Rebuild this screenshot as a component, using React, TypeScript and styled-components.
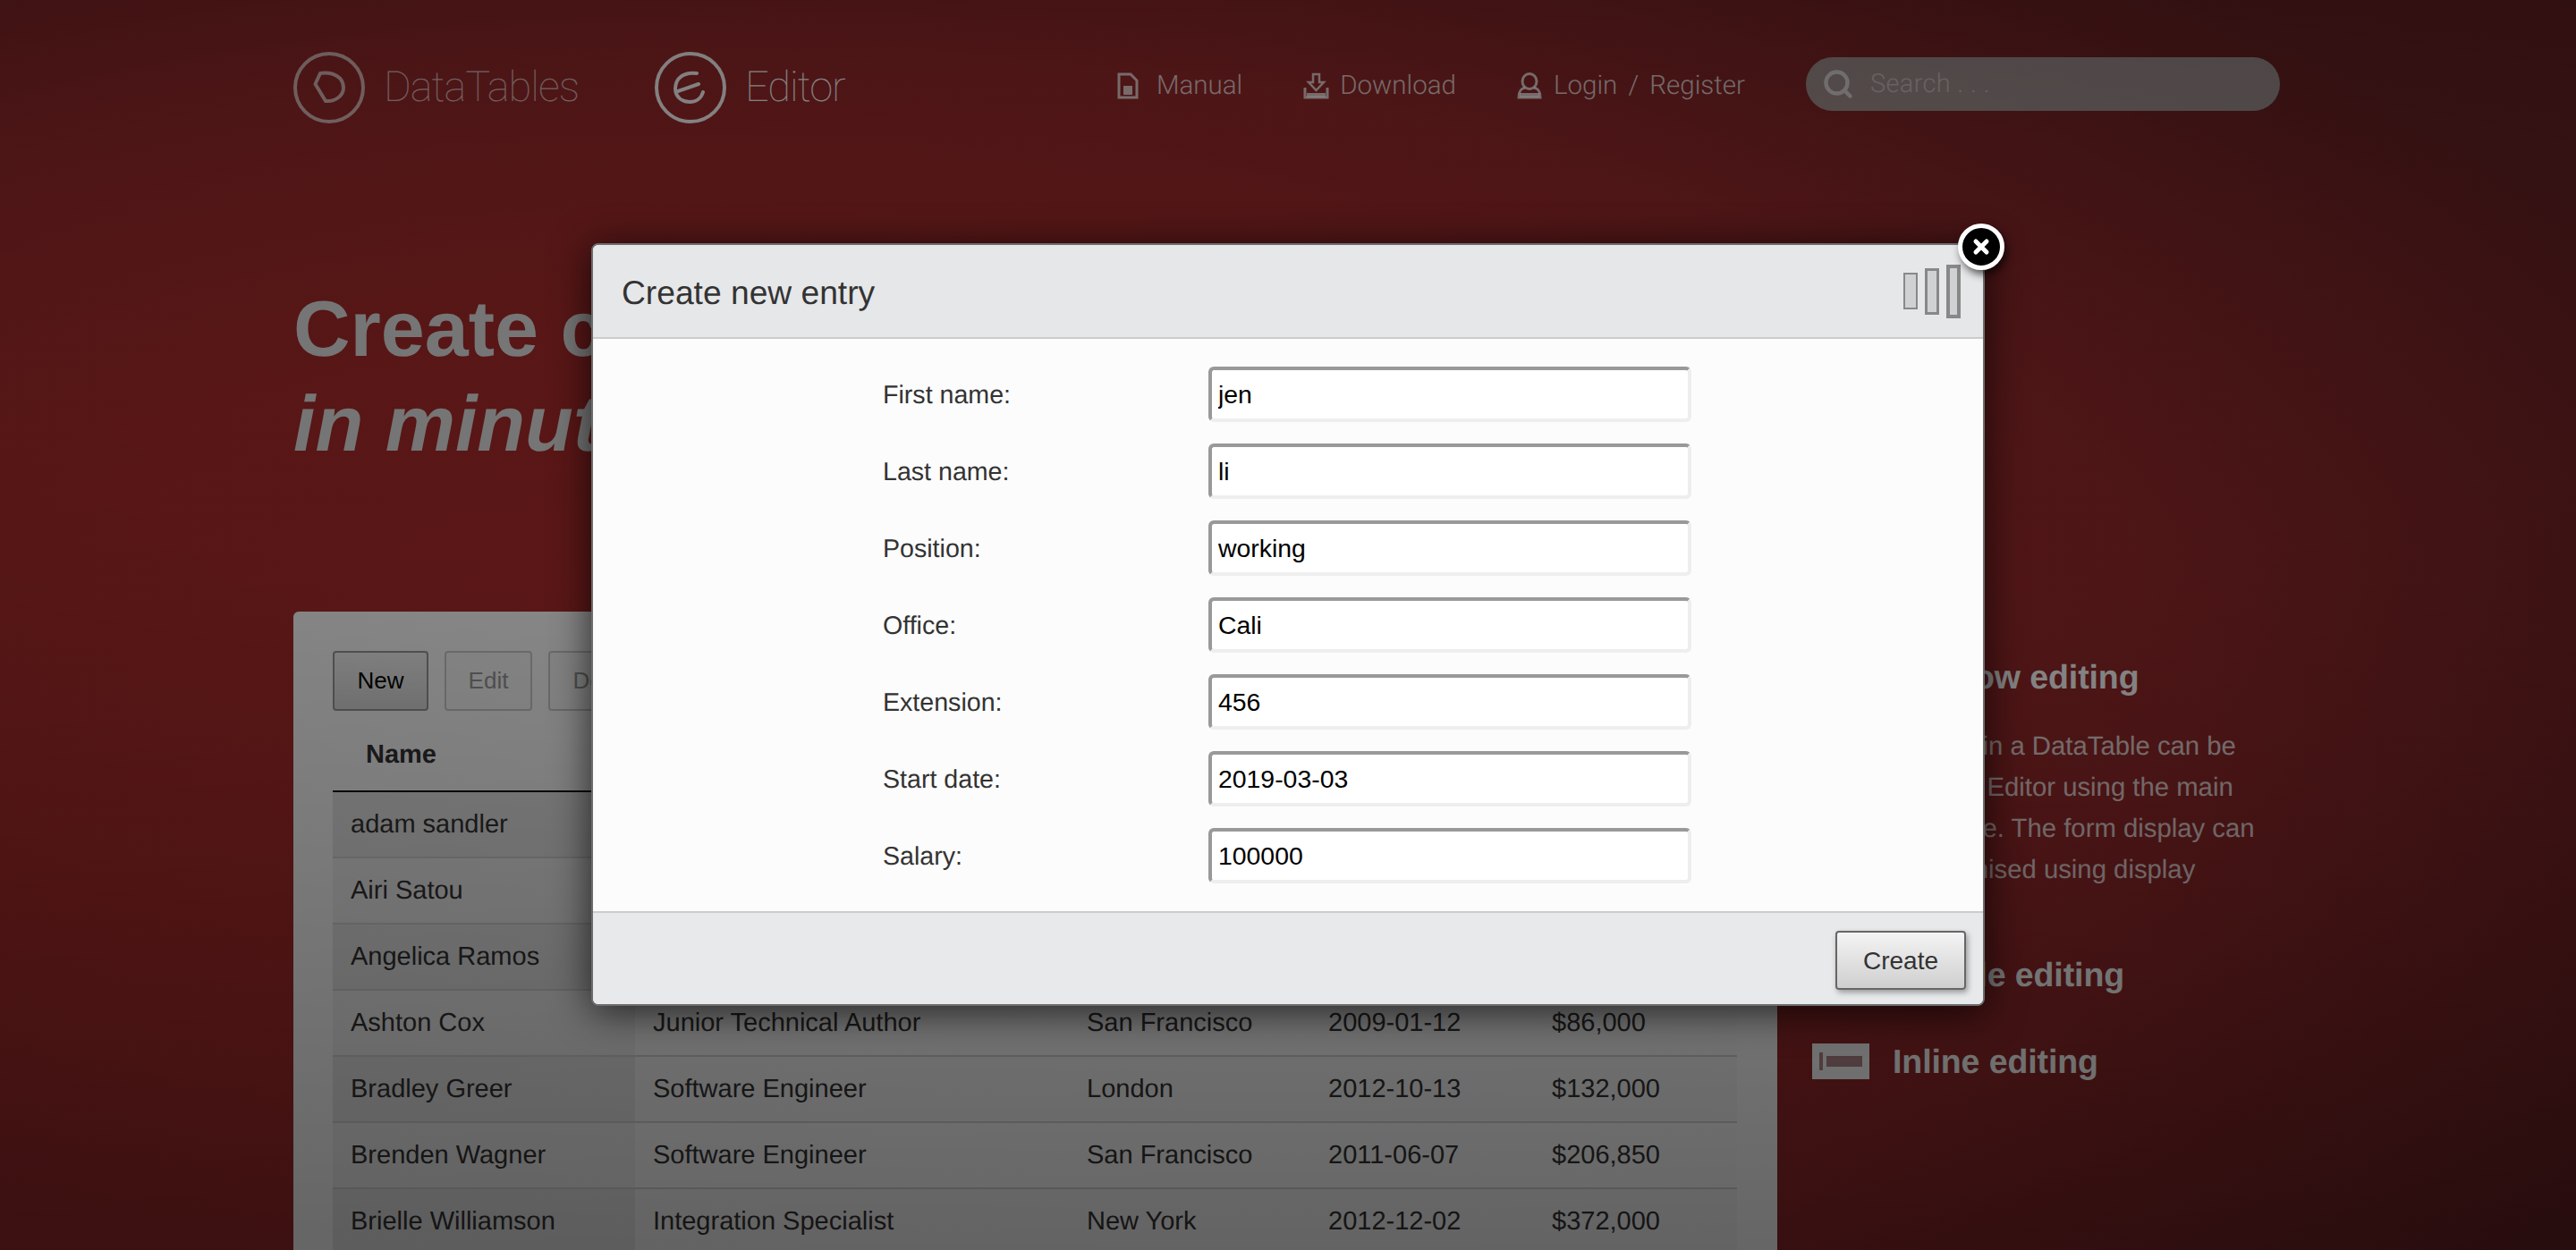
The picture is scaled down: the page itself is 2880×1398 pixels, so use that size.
import React from 'react';
import styled, { createGlobalStyle } from 'styled-components';
import { Search } from 'lucide-react';

const GlobalStyle = createGlobalStyle`
  html, body {
    margin: 0;
    padding: 0;
    background: #8c2020;
    font-family: 'Liberation Sans', Arial, sans-serif;
    text-rendering: geometricPrecision;
  }
  * {
    box-sizing: border-box;
  }
`;

const Page = styled.div`
  position: relative;
  width: 2880px;
  height: 1398px;
  overflow: hidden;
  background: radial-gradient(
    ellipse 2400px 1100px at 800px 800px,
    #ae2b2b 0%,
    #a52a2a 40%,
    #91282a 68%,
    #7d2426 82%,
    #642022 100%
  );
`;

const Inner = styled.div`
  width: 2224px;
  margin: 0 auto;
  padding-top: 58px;
`;

const Header = styled.header`
  display: flex;
  align-items: center;
  height: 79px;
  padding-right: 3px;
`;

const Logo = styled.div<{ $dim?: boolean }>`
  display: flex;
  align-items: center;
  gap: 21px;
  margin-right: 85px;
  color: #fff;
  opacity: ${(p) => (p.$dim ? 0.65 : 0.95)};
`;

const LogoName = styled.span`
  font-family: 'Roboto', sans-serif;
  font-weight: 100;
  font-size: 47px;
  letter-spacing: -1px;
`;

const Nav = styled.nav`
  display: flex;
  align-items: center;
  gap: 68px;
  margin-left: auto;
  margin-bottom: 4px;
`;

const NavItem = styled.a<{ $gap: number }>`
  display: flex;
  align-items: center;
  gap: ${(p) => p.$gap}px;
  color: rgba(255, 255, 255, 0.75);
  font-family: 'Roboto', sans-serif;
  font-weight: 300;
  font-size: 29.500px;
  word-spacing: 5px;
`;

const SearchBox = styled.div`
  display: flex;
  align-items: center;
  gap: 18px;
  width: 530px;
  height: 60px;
  margin-bottom: 4px;
  padding-left: 18px;
  border-radius: 30px;
  background: rgba(165, 165, 165, 0.8);
  color: #fff;
  font-family: 'Roboto', sans-serif;
  font-weight: 300;
  font-size: 29px;
`;

const SearchHint = styled.span`
  opacity: 0.42;
  letter-spacing: 0.3px;
`;

const Hero = styled.h1`
  margin: 178px 0 0;
  font-size: 88px;
  line-height: 106px;
  font-weight: 700;
  color: #dcdcdc;
  white-space: nowrap;
`;

const HeroLine = styled.em`
  display: block;
  font-style: italic;
`;

const Columns = styled.div`
  display: grid;
  grid-template-columns: 1659px 1fr;
  column-gap: 39px;
  margin-top: 157px;
`;

const Card = styled.section`
  padding: 44px 45px 0 44px;
  border-radius: 6px 6px 0 0;
  background: #fff;
  height: 760px;
`;

const Toolbar = styled.div`
  display: flex;
  gap: 18px;
`;

const ToolButton = styled.button<{ $off?: boolean; $w: number }>`
  width: ${(p) => p.$w}px;
  height: 67px;
  border: 2px solid ${(p) => (p.$off ? '#ccc' : '#999')};
  border-radius: 4px;
  background: ${(p) => (p.$off ? '#fbfbfb' : 'linear-gradient(#f6f6f6, #dcdcdc)')};
  color: ${(p) => (p.$off ? '#999' : '#000')};
  font-family: inherit;
  font-size: 26px;
  padding: 0;
`;

const Table = styled.table`
  width: 1570px;
  margin-top: 9px;
  border-collapse: collapse;
  table-layout: fixed;
  font-size: 29px;
  color: #333;
`;

const Th = styled.th<{ $w: number }>`
  width: ${(p) => p.$w}px;
  height: 81px;
  padding: 0 0 0 37px;
  text-align: left;
  font-size: 29px;
  font-weight: 700;
  color: #333;
  border-bottom: 2px solid #111;
`;

const Tr = styled.tr<{ $odd: boolean }>`
  background: ${(p) => (p.$odd ? '#f8f8f8' : '#fdfdfd')};
`;

const Td = styled.td<{ $shade?: string }>`
  height: 74px;
  padding: 0 0 0 20px;
  border-bottom: 2px solid #d6d6d6;
  background: ${(p) => p.$shade ?? 'transparent'};
  white-space: nowrap;
`;

const Sidebar = styled.aside`
  padding-top: 51px;
  color: #fff;
`;

const Feature = styled.h3`
  display: flex;
  align-items: center;
  gap: 26px;
  height: 44px;
  margin: 0 0 33px;
  font-size: 37.500px;
  font-weight: 700;
  letter-spacing: -0.1px;
  white-space: nowrap;
  & + h3 {
    margin-top: 53px;
  }
`;

const Copy = styled.p`
  margin: 0 0 72px;
  width: 526px;
  font-size: 29.300px;
  line-height: 46px;
  white-space: nowrap;
  opacity: 0.8;
`;

const Overlay = styled.div`
  position: absolute;
  inset: 0;
  display: flex;
  justify-content: center;
  align-items: flex-start;
  padding-top: 272px;
  background: radial-gradient(
    ellipse 5000px 1000px at 1440px 400px,
    rgba(0, 0, 0, 0.46) 0%,
    rgba(0, 0, 0, 0.47) 30%,
    rgba(0, 0, 0, 0.6) 100%
  );
`;

const Modal = styled.div`
  position: relative;
  width: 1558px;
  height: 853px;
  display: flex;
  flex-direction: column;
  border: 2px solid #6d6d6d;
  border-radius: 8px;
  background: #fcfcfc;
  box-shadow: 0 6px 44px rgba(0, 0, 0, 0.7);
`;

const ModalHead = styled.div`
  display: flex;
  align-items: center;
  justify-content: space-between;
  height: 105px;
  padding: 3px 25px 0 32px;
  background: #e6e7e9;
  border-bottom: 2px solid #ccc;
  border-radius: 6px 6px 0 0;
`;

const ModalTitle = styled.h2`
  margin: 0;
  font-size: 37.200px;
  font-weight: 400;
  color: #333;
`;

const Bars = styled.div`
  display: flex;
  align-items: center;
  gap: 8px;
  margin-top: -3px;
`;

const Bar = styled.span<{ $h: number; $line: number }>`
  display: block;
  width: 16px;
  height: ${(p) => p.$h}px;
  background: #d0d1d3;
  border: ${(p) => p.$line}px solid #888;
`;

const Close = styled.button`
  position: absolute;
  top: -24px;
  right: -24px;
  display: flex;
  align-items: center;
  justify-content: center;
  width: 52px;
  height: 52px;
  padding: 0;
  border: 5px solid #fff;
  border-radius: 50%;
  background: #000;
  box-shadow: 3px 5px 10px rgba(0, 0, 0, 0.65);
`;

const Form = styled.div`
  flex: 1;
  display: flex;
  flex-direction: column;
  align-items: center;
  gap: 24px;
  padding: 31px 2px 0 0;
`;

const Field = styled.label`
  display: grid;
  grid-template-columns: 364px 540px;
  align-items: center;
  height: 62px;
  font-size: 28.600px;
  color: #333;
`;

const FieldName = styled.span`
  padding-top: 3px;
`;

const Input = styled.input`
  width: 540px;
  height: 62px;
  padding: 0 0 0 7px;
  border-style: solid;
  border-width: 4px;
  border-color: #999 #eee #eee #999;
  border-radius: 6px;
  background: #fff;
  font-family: inherit;
  font-size: 28.400px;
  color: #000;
  outline: none;
`;

const ModalFoot = styled.div`
  display: flex;
  justify-content: flex-end;
  align-items: flex-start;
  height: 104px;
  padding: 20px 19px 0 0;
  background: #e8e9eb;
  border-top: 2px solid #ccc;
  border-radius: 0 0 6px 6px;
`;

const CreateButton = styled.button`
  width: 146px;
  height: 66px;
  padding: 2px 0 0;
  border: 2px solid #666;
  border-radius: 4px;
  background: linear-gradient(#f4f4f4, #cfcfcf);
  box-shadow: 2px 3px 6px rgba(0, 0, 0, 0.35);
  color: #333;
  font-family: inherit;
  font-size: 28px;
`;

const DocIcon = () => (
  <svg width="24" height="30" viewBox="0 0 24 30">
    <path d="M2 2h13l7 7v19H2z" fill="none" stroke="currentColor" strokeWidth="3" />
    <path d="M7 15h10v10H7z" fill="currentColor" />
  </svg>
);

const DownloadIcon = () => (
  <svg width="29" height="30" viewBox="0 0 29 30">
    <path d="M11 2h7v9h5l-8.500 9L6 11h5z" fill="none" stroke="currentColor" strokeWidth="2.500" />
    <path d="M2 17v11h25V17" fill="none" stroke="currentColor" strokeWidth="3" />
    <path d="M4 23h21v5H4z" fill="currentColor" />
  </svg>
);

const UserIcon = () => (
  <svg width="28" height="30" viewBox="0 0 28 30">
    <ellipse cx="14" cy="10" rx="8" ry="8.500" fill="none" stroke="currentColor" strokeWidth="3" />
    <path d="M9 17c-5 1-7 4-7 11h24c0-7-2-10-7-11" fill="none" stroke="currentColor" strokeWidth="3" />
    <path d="M3 23h22v5H3z" fill="currentColor" />
  </svg>
);

const EditorMark = ({ d }: { d: string }) => (
  <svg width="80" height="80" viewBox="0 0 80 80" fill="none" stroke="#fff">
    <circle cx="40" cy="40" r="38" strokeWidth="4" />
    <path d={d} strokeWidth="4" strokeLinecap="round" strokeLinejoin="round" />
  </svg>
);

const FeatureIcon = () => (
  <svg width="64" height="40" viewBox="0 0 64 40" style={{ flex: 'none' }}>
    <rect width="64" height="40" fill="#fff" />
    <rect x="8" y="10" width="4" height="20" fill="#b58a8e" />
    <rect x="16" y="14" width="40" height="12" fill="#b58a8e" />
  </svg>
);

const fields = [
  ['First name:', 'jen'],
  ['Last name:', 'li'],
  ['Position:', 'working'],
  ['Office:', 'Cali'],
  ['Extension:', '456'],
  ['Start date:', '2019-03-03'],
  ['Salary:', '100000'],
];

const rows = [
  ['adam sandler', 'working', 'Cali', '2019-03-03', '$100,000'],
  ['Airi Satou', 'Accountant', 'Tokyo', '2008-11-28', '$162,700'],
  ['Angelica Ramos', 'Chief Executive Officer (CEO)', 'London', '2009-10-09', '$1,200,000'],
  ['Ashton Cox', 'Junior Technical Author', 'San Francisco', '2009-01-12', '$86,000'],
  ['Bradley Greer', 'Software Engineer', 'London', '2012-10-13', '$132,000'],
  ['Brenden Wagner', 'Software Engineer', 'San Francisco', '2011-06-07', '$206,850'],
  ['Brielle Williamson', 'Integration Specialist', 'New York', '2012-12-02', '$372,000'],
];

export default function App() {
  return (
    <Page>
      <GlobalStyle />
      <Inner>
        <Header>
          <Logo $dim>
            <EditorMark d="M30 24C44 22 56 28 56 40C56 49 47 56 36 55L24.500 36Z" />
            <LogoName>DataTables</LogoName>
          </Logo>
          <Logo>
            <EditorMark d="M47 24C32 22 23 30 23 41C23 50 30 56 39 56C46 56 52 52 54 45M26 44L49 36" />
            <LogoName>Editor</LogoName>
          </Logo>
          <Nav>
            <NavItem $gap={20}>
              <DocIcon />
              Manual
            </NavItem>
            <NavItem $gap={12}>
              <DownloadIcon />
              Download
            </NavItem>
            <NavItem $gap={13}>
              <UserIcon />
              Login / Register
            </NavItem>
            <SearchBox>
              <Search size={36} strokeWidth={3} color="#fff" opacity={0.6} />
              <SearchHint>Search . . .</SearchHint>
            </SearchBox>
          </Nav>
        </Header>

        <Hero>
          Create custom tables
          <HeroLine>in minutes with Editor</HeroLine>
        </Hero>

        <Columns>
          <Card>
            <Toolbar>
              <ToolButton $w={107}>New</ToolButton>
              <ToolButton $w={98} $off>
                Edit
              </ToolButton>
              <ToolButton $w={130} $off>
                Delete
              </ToolButton>
            </Toolbar>
            <Table>
              <thead>
                <tr>
                  <Th $w={338}>Name</Th>
                  <Th $w={485}>Position</Th>
                  <Th $w={270}>Office</Th>
                  <Th $w={250}>Start date</Th>
                  <Th $w={227}>Salary</Th>
                </tr>
              </thead>
              <tbody>
                {rows.map((row, r) => (
                  <Tr key={row[0]} $odd={r % 2 === 0}>
                    {row.map((cell, i) => (
                      <Td key={cell} $shade={i === 0 ? (r % 2 === 0 ? '#e9e9e9' : '#f3f3f3') : undefined}>
                        {cell}
                      </Td>
                    ))}
                  </Tr>
                ))}
              </tbody>
            </Table>
          </Card>

          <Sidebar>
            <Feature>
              <FeatureIcon />
              Full row editing
            </Feature>
            <Copy>
              Every row within a DataTable can be
              <br />
              edited through Editor using the main
              <br />
              editing interface. The form display can
              <br />
              also be customised using display
            </Copy>
            <Feature>
              <FeatureIcon />
              Bubble editing
            </Feature>
            <Feature>
              <FeatureIcon />
              Inline editing
            </Feature>
          </Sidebar>
        </Columns>
      </Inner>

      <Overlay>
        <Modal>
          <ModalHead>
            <ModalTitle>Create new entry</ModalTitle>
            <Bars>
              <Bar $h={41} $line={2} />
              <Bar $h={52} $line={3} />
              <Bar $h={60} $line={4} />
            </Bars>
          </ModalHead>
          <Close aria-label="Close">
            <svg width="20" height="20" viewBox="0 0 20 20">
              <path d="M4 4l12 12M16 4L4 16" stroke="#fff" strokeWidth="5" strokeLinecap="round" />
            </svg>
          </Close>
          <Form>
            {fields.map(([label, value]) => (
              <Field key={label}>
                <FieldName>{label}</FieldName>
                <Input readOnly value={value} />
              </Field>
            ))}
          </Form>
          <ModalFoot>
            <CreateButton>Create</CreateButton>
          </ModalFoot>
        </Modal>
      </Overlay>
    </Page>
  );
}
